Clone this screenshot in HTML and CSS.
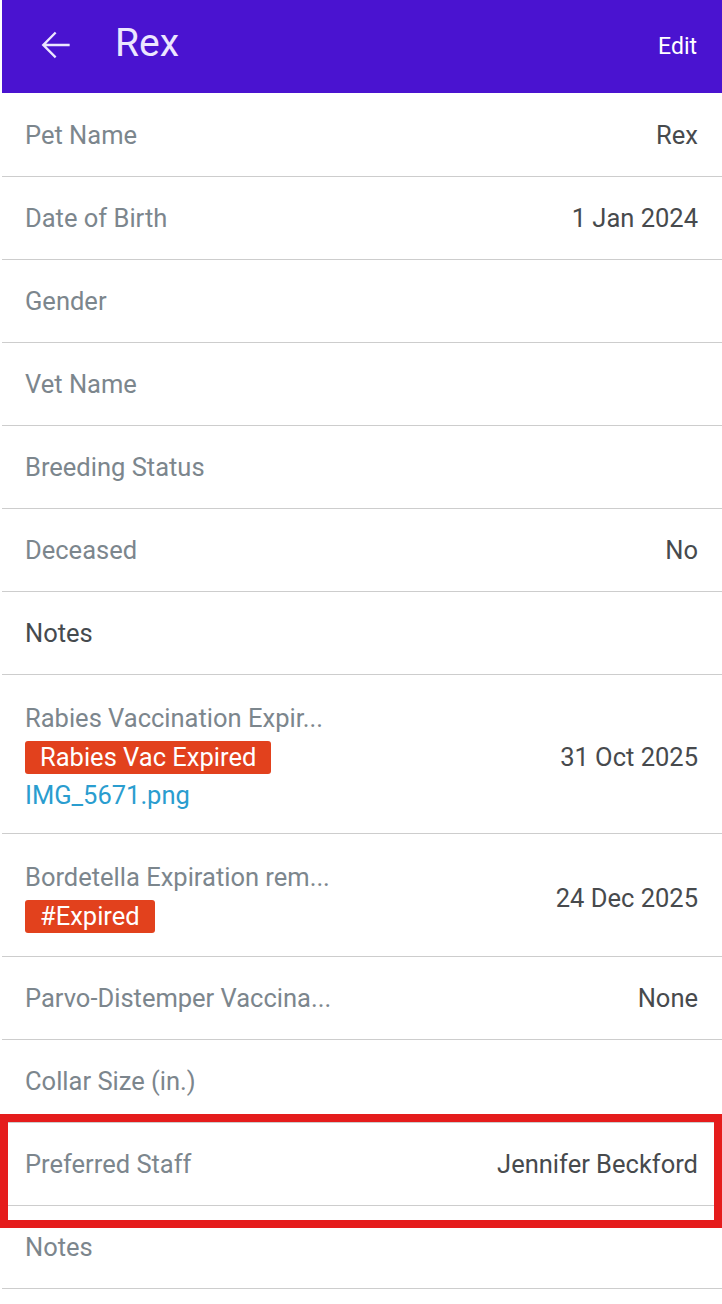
FILE: index.html
```html
<html>
<head>
	<link rel="stylesheet" href="styles.css">
</head>
<body>
	<div class="header">
		<div class="back">
			<svg width="44" height="44" viewBox="0 0 24 24"><path d="M20 11.25H7.2l5.6-5.6L11.9 4.8l-7.2 7.2 7.2 7.2.9-.9-5.6-5.6H20v-1.5z" fill="#ece6ff"/></svg>
		</div>
		<div class="title">Rex</div>
		<div class="edit">Edit</div>
	</div>
	<div class="list">
		<div class="row">
			<div class="label">Pet Name</div>
			<div class="value">Rex</div>
		</div>
		<div class="row">
			<div class="label">Date of Birth</div>
			<div class="value">1 Jan 2024</div>
		</div>
		<div class="row">
			<div class="label">Gender</div>
		</div>
		<div class="row">
			<div class="label">Vet Name</div>
		</div>
		<div class="row">
			<div class="label">Breeding Status</div>
		</div>
		<div class="row">
			<div class="label">Deceased</div>
			<div class="value">No</div>
		</div>
		<div class="row">
			<div class="label dark">Notes</div>
		</div>
		<div class="row tall">
			<div class="stack">
				<div class="label">Rabies Vaccination Expir...</div>
				<div><span class="tag">Rabies Vac Expired</span></div>
				<div class="link">IMG_5671.png</div>
			</div>
			<div class="value">31 Oct 2025</div>
		</div>
		<div class="row tall">
			<div class="stack">
				<div class="label">Bordetella Expiration rem...</div>
				<div><span class="tag">#Expired</span></div>
			</div>
			<div class="value">24 Dec 2025</div>
		</div>
		<div class="row">
			<div class="label">Parvo-Distemper Vaccina...</div>
			<div class="value">None</div>
		</div>
		<div class="row">
			<div class="label">Collar Size (in.)</div>
		</div>
		<div class="row marked">
			<div class="label">Preferred Staff</div>
			<div class="value">Jennifer Beckford</div>
			<div class="highlight"></div>
		</div>
		<div class="row">
			<div class="label">Notes</div>
		</div>
	</div>
</body>
</html>
```
FILE: styles.css
```css
body
{
	margin: 0;
	background-color: white;
	font-family: Roboto, "Noto Sans", sans-serif;
}
.header
{
	height: 93px;
	margin-left: 2px;
	background-color: #4a13d0;
	display: flex;
	align-items: center;
	color: #ece6ff;
}
.back
{
	width: 44px;
	height: 44px;
	margin-left: 31px;
	margin-top: -4px;
}
.title
{
	font-size: 39px;
	margin-left: 38px;
	margin-top: -8px;
	flex: 1;
}
.edit
{
	font-size: 23px;
	margin-right: 25px;
	color: white;
}
.list
{
	margin-left: 2px;
	padding-top: 1px;
}
.row
{
	position: relative;
	box-sizing: border-box;
	min-height: 83px;
	display: flex;
	align-items: center;
	justify-content: space-between;
	padding: 0 24px 0 23px;
	border-bottom: 1px solid #cdcdcd;
	font-size: 25.5px;
	line-height: 30px;
}
.row.tall
{
	padding-top: 28px;
	padding-bottom: 23px;
}
.stack
{
	display: flex;
	flex-direction: column;
	gap: 8px;
}
.label
{
	color: #7c868d;
}
.label.dark
{
	color: #454a4e;
}
.value
{
	color: #474a4d;
}
.tag
{
	display: inline-block;
	background-color: #e2411d;
	color: white;
	border-radius: 3px;
	padding: 0 15px;
	line-height: 33px;
}
.link
{
	color: #2a9dcf;
	margin-top: -2px;
}
.highlight
{
	position: absolute;
	left: -2px;
	right: 0;
	top: -9px;
	bottom: -23px;
	border: 8px solid #e51c1c;
}
```
